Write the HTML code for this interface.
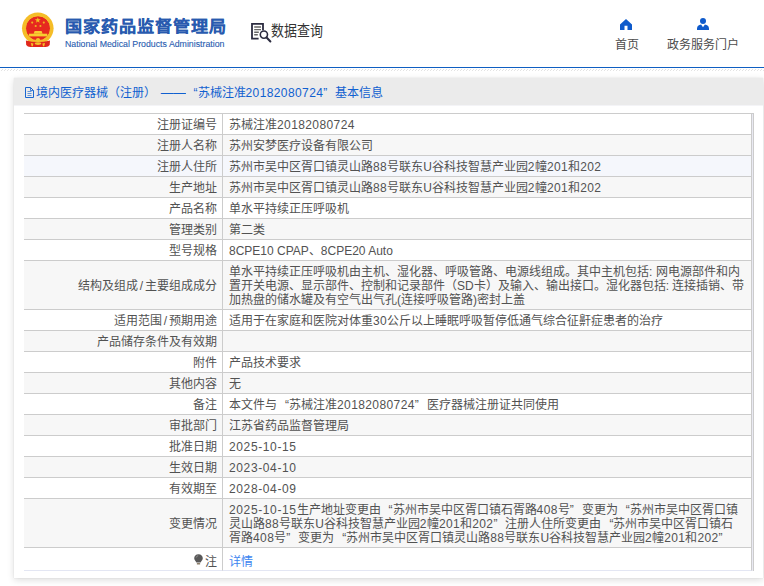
<!DOCTYPE html>
<html lang="zh-CN">
<head>
<meta charset="utf-8">
<title>国家药品监督管理局 数据查询</title>
<style>
*{margin:0;padding:0;box-sizing:border-box;}
html,body{width:764px;height:586px;overflow:hidden;background:#fff;}
body{position:relative;font-family:"Liberation Sans",sans-serif;font-size:12px;color:#333;}
.abs{position:absolute;}
#emblem{left:21px;top:12px;width:34px;height:36px;}
#t1{left:64.8px;top:15px;font-size:16.3px;line-height:22px;letter-spacing:1.15px;font-weight:bold;color:#285aaf;-webkit-text-stroke:0.1px #285aaf;white-space:nowrap;transform:scaleX(1.05);transform-origin:0 0;}
#t2{left:65px;top:37.8px;font-size:9.2px;line-height:12px;color:#2a5db0;-webkit-text-stroke:0.12px #2a5db0;white-space:nowrap;transform:scaleX(0.955);transform-origin:0 0;}
#qicon{left:250px;top:22px;width:22px;height:21px;}
#qtext{left:270.6px;top:21.3px;font-size:15px;line-height:20px;color:#333;white-space:nowrap;transform:scaleX(0.865);transform-origin:0 0;}
.nav{font-size:12px;line-height:14px;color:#4c4c4c;white-space:nowrap;text-align:center;}
#hline{left:0;top:66.9px;width:764px;height:1.15px;background:#0f5fc2;}
#hatch{left:0;top:68.6px;width:764px;height:2.4px;background:repeating-linear-gradient(135deg,#dadada 0,#dadada 0.7px,#fff 0.7px,#fff 2.1213px);opacity:.75;}
#panel{left:14px;top:78px;width:749px;height:500px;background:#fff;box-shadow:0 0 1px rgba(0,0,0,.12),0 2px 7px rgba(0,0,0,.14);}
#ptitle{left:0;top:0;width:749px;height:28px;background:#ebebeb;border-bottom:1px solid #f4f4f7;color:#1060d0;font-size:12px;line-height:31px;white-space:nowrap;}
#wrap{left:10px;top:35px;width:730px;border-top:1px solid #ccc;border-right:1px solid #ccc;padding-right:1px;background:#e9e9f2;}
table{border-collapse:separate;border-spacing:0;width:728px;table-layout:fixed;background:#fff;}
th,td{font-size:12px;line-height:14px;padding:4px 6px 2px;border-bottom:1px solid #ccc;border-right:1px solid #ccc;font-weight:normal;vertical-align:middle;color:#525252;}
th{width:199px;text-align:right;padding-right:5.5px;}
.n{letter-spacing:0.4px;}
.d{letter-spacing:0.62px;}
.sl{padding:0 1.4px;}
.dash{display:inline-block;width:29.5px;text-align:right;}
.dash span{display:inline-block;transform:scaleX(1.054);transform-origin:100% 50%;}
.ql,.qr{display:inline-block;width:12px;}
.ql{text-align:right;}
.qr{text-align:left;}
.bulb{display:inline-block;width:9px;height:11px;vertical-align:-1px;position:relative;top:-1.6px;margin-right:1.8px;}
td{text-align:left;white-space:nowrap;}
tr.g th,tr.g td{background:#f7f7f7;}
tr.h th,tr.h td{background:#f5f7fc;}
tr.last th,tr.last td{height:23px;padding-top:7px;padding-bottom:1px;border-bottom-color:#e3e6f3;}
a{color:#3d85f0;text-decoration:none;}
</style>
</head>
<body>
<svg id="emblem" class="abs" viewBox="0 0 34 36">
  <circle cx="16.8" cy="16.3" r="15.8" fill="#f5bd27"/>
  <path d="M4.9 28.4 Q17 31.5 29 28.4 L28.7 33 Q27.4 35 24.4 34.9 H9.6 Q6.6 35 5.2 33 Z" fill="#e0271b"/>
  <circle cx="17" cy="16.3" r="12.3" fill="#e6291f"/>
  <circle cx="17" cy="16.3" r="12.5" fill="none" stroke="#f6c62c" stroke-width="0.9"/>
  <path d="M16.8 5.2 l0.75 2.1 h2.2 l-1.8 1.35 l0.7 2.15 l-1.85 -1.3 l-1.85 1.3 l0.7 -2.15 l-1.8 -1.35 h2.2z" fill="#f3c01f"/>
  <circle cx="11.2" cy="10.6" r="1.05" fill="#efb320"/><circle cx="22.8" cy="10.6" r="1.05" fill="#efb320"/>
  <circle cx="14.7" cy="14" r="1.05" fill="#efb320"/><circle cx="19.4" cy="14" r="1.05" fill="#efb320"/>
  <path d="M12.6 21.7 L13.6 19 H20.6 L21.6 21.7 Z" fill="#f7cd30"/>
  <rect x="7.9" y="21.7" width="18.4" height="2.7" fill="#f7cd30"/>
  <path d="M14.6 29.2 Q14.8 26.2 17 26.1 Q19.2 26.2 19.4 29.2 Z" fill="#f4c128"/>
  <path d="M13.6 31.6 Q13.8 30.2 17 30.2 Q20.2 30.2 20.4 31.6 Q20.2 33 17 33 Q13.8 33 13.6 31.6Z" fill="#f4c128"/>
  <path d="M9.8 31 L12.4 31.4 L11.8 34.2 H10.6Z M24 31 L21.4 31.4 L22 34.2 H23.2Z" fill="#f4c128"/>
</svg>
<div id="t1" class="abs">国家药品监督管理局</div>
<div id="t2" class="abs">National Medical Products Administration</div>

<svg id="qicon" class="abs" viewBox="0 0 22 21" fill="none" stroke="#2c2c40">
  <path d="M8.6 16.6 H2 V1.9 H13 V8.2" stroke-width="1.8"/>
  <path d="M4.2 5 H11 M4.2 7.6 H11 M4.2 10.2 H8.8 M4.2 12.8 H7.8" stroke-width="1.4" stroke="#666"/>
  <circle cx="13.9" cy="12.6" r="3.6" stroke-width="1.6" fill="#fff"/>
  <path d="M16.6 15.5 L20.4 19.5" stroke-width="2" stroke-linecap="round"/>
</svg>
<div id="qtext" class="abs">数据查询</div>

<svg class="abs" style="left:620px;top:18.6px;width:12px;height:11.4px" viewBox="0 0 12 11.4"><path d="M6 0 L12 5.4 V11.4 H7.5 V6.8 H4.5 V11.4 H0 V5.4 Z" fill="#0e5acb"/></svg>
<div class="abs nav" style="left:596.8px;top:37.5px;width:60px;">首页</div>
<svg class="abs" style="left:697px;top:18px;width:12px;height:12px" viewBox="0 0 12 12"><circle cx="6" cy="3" r="3" fill="#0e5acb"/><path d="M0 12 V10.4 Q0.3 7.2 4.1 6.6 L6 9.3 L7.9 6.6 Q11.7 7.2 12 10.4 V12 Z" fill="#0e5acb"/></svg>
<div class="abs nav" style="left:662.8px;top:37.5px;width:80px;">政务服务门户</div>

<div id="hline" class="abs"></div>
<div id="hatch" class="abs"></div>

<div id="panel" class="abs">
  <div id="ptitle" class="abs">
    <svg class="abs" style="left:11px;top:9px;width:9px;height:11px" viewBox="0 0 9 11" fill="none" stroke="#1a66d0" stroke-width="1"><path d="M0.5 0.5 H5.5 L8.5 3.5 V10.5 H0.5 Z"/><path d="M5.5 0.5 V3.5 H8.5" stroke-opacity="0.8"/><path d="M2.5 4.5 H6.5 M2.5 6.5 H6.5 M2.5 8.5 H6.5" stroke-opacity="0.65"/></svg>
    <span class="abs" style="left:22px;top:0;">境内医疗器械（注册）<span class="dash"><span>——</span></span><span class="ql">“</span>苏械注准<span class="n">20182080724</span><span class="qr">”</span>基本信息</span>
  </div>
  <div id="wrap" class="abs">
  <table>
    <tr><th>注册证编号</th><td>苏械注准<span class="n">20182080724</span></td></tr>
    <tr class="g"><th>注册人名称</th><td>苏州安梦医疗设备有限公司</td></tr>
    <tr class="h"><th>注册人住所</th><td>苏州市吴中区胥口镇灵山路<span class="n">88</span>号联东U谷科技智慧产业园<span class="n">2</span>幢<span class="n">201</span>和<span class="n">202</span></td></tr>
    <tr class="g"><th>生产地址</th><td>苏州市吴中区胥口镇灵山路<span class="n">88</span>号联东U谷科技智慧产业园<span class="n">2</span>幢<span class="n">201</span>和<span class="n">202</span></td></tr>
    <tr><th>产品名称</th><td>单水平持续正压呼吸机</td></tr>
    <tr class="g"><th>管理类别</th><td>第二类</td></tr>
    <tr><th>型号规格</th><td>8CPE10 CPAP、8CPE20 Auto</td></tr>
    <tr class="g"><th>结构及组成<span class="sl">/</span>主要组成成分</th><td>单水平持续正压呼吸机由主机、湿化器、呼吸管路、电源线组成。其中主机包括: 网电源部件和内<br>置开关电源、显示部件、控制和记录部件（SD卡）及输入、输出接口。湿化器包括: 连接插销、带<br>加热盘的储水罐及有空气出气孔(连接呼吸管路)密封上盖</td></tr>
    <tr><th>适用范围<span class="sl">/</span>预期用途</th><td>适用于在家庭和医院对体重<span class="n">30</span>公斤以上睡眠呼吸暂停低通气综合征鼾症患者的治疗</td></tr>
    <tr class="g"><th>产品储存条件及有效期</th><td>&nbsp;</td></tr>
    <tr><th>附件</th><td>产品技术要求</td></tr>
    <tr class="g"><th>其他内容</th><td>无</td></tr>
    <tr><th>备注</th><td>本文件与<span class="ql">“</span>苏械注准<span class="n">20182080724</span><span class="qr">”</span>医疗器械注册证共同使用</td></tr>
    <tr class="g"><th>审批部门</th><td>江苏省药品监督管理局</td></tr>
    <tr><th>批准日期</th><td><span class="d">2025-10-15</span></td></tr>
    <tr class="g"><th>生效日期</th><td><span class="d">2023-04-10</span></td></tr>
    <tr><th>有效期至</th><td><span class="d">2028-04-09</span></td></tr>
    <tr class="g"><th>变更情况</th><td><span class="d">2025-10-15</span>生产地址变更由<span class="ql">“</span>苏州市吴中区胥口镇石胥路<span class="n">408</span>号<span class="qr">”</span>变更为<span class="ql">“</span>苏州市吴中区胥口镇<br>灵山路<span class="n">88</span>号联东U谷科技智慧产业园<span class="n">2</span>幢<span class="n">201</span>和<span class="n">202</span><span class="qr">”</span>注册人住所变更由<span class="ql">“</span>苏州市吴中区胥口镇石<br>胥路<span class="n">408</span>号<span class="qr">”</span>变更为<span class="ql">“</span>苏州市吴中区胥口镇灵山路<span class="n">88</span>号联东U谷科技智慧产业园<span class="n">2</span>幢<span class="n">201</span>和<span class="n">202</span><span class="qr">”</span></td></tr>
    <tr class="last"><th><svg class="bulb" viewBox="0 0 9 11"><path d="M4.5 0.2 C7.2 0.2 8.8 2.1 8.8 4.3 C8.8 6.2 7.2 7.2 6.6 8.6 H2.4 C1.8 7.2 0.2 6.2 0.2 4.3 C0.2 2.1 1.8 0.2 4.5 0.2Z" fill="#585858"/><path d="M2.2 3.6 Q2.6 1.9 4.2 1.6" stroke="#9a9a9a" stroke-width="0.8" fill="none"/><rect x="2.8" y="8.9" width="3.4" height="1.7" rx="0.5" fill="#8d7f6a"/></svg>注</th><td><a>详情</a></td></tr>
  </table>
  </div>
</div>
</body>
</html>
